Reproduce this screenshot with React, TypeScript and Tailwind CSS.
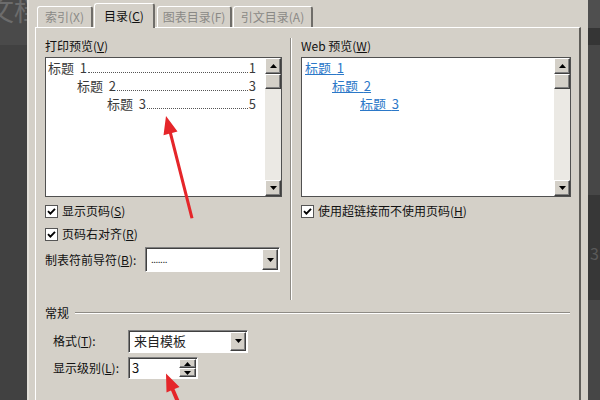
import React from "react";

const Tri = ({ up }: { up?: boolean }) => (
  <svg width="7" height="4" viewBox="0 0 7 4">
    <polygon points={up ? "3.5,0 7,4 0,4" : "0,0 7,0 3.5,4"} fill="#000" />
  </svg>
);

const Raised = ({ className = "", children }: { className?: string; children?: React.ReactNode }) => (
  <div
    className={`bg-[#d4d0c8] border border-t-white border-l-white border-b-[#404040] border-r-[#404040] shadow-[inset_-1px_-1px_0_#808080] flex items-center justify-center ${className}`}
  >
    {children}
  </div>
);

const Scrollbar = () => (
  <div className="w-[16px] flex flex-col bg-[#ebe9e4]">
    <Raised className="h-[16px]">
      <Tri up />
    </Raised>
    <Raised className="h-[15px]" />
    <div className="flex-1" />
    <Raised className="h-[16px]">
      <Tri />
    </Raised>
  </div>
);

const Check = () => (
  <div className="w-[13px] h-[13px] bg-white border border-[#555] flex items-center justify-center shrink-0">
    <svg width="9" height="9" viewBox="0 0 9 9">
      <polyline points="1,4.2 3.4,6.6 8,1.8" fill="none" stroke="#000" strokeWidth="1.9" />
    </svg>
  </div>
);

const Combo = ({ className = "", children }: { className?: string; children?: React.ReactNode }) => (
  <div
    className={`flex bg-white border border-t-[#808080] border-l-[#808080] border-b-white border-r-white shadow-[inset_1px_1px_0_#404040] p-[1px] ${className}`}
  >
    <div className="flex-1 flex items-center pl-[4px] text-[13px] text-[#222]">{children}</div>
    <Raised className="w-[16px]">
      <Tri />
    </Raised>
  </div>
);

const printRows = [
  { pad: "pl-[2px]", n: "1", page: "1" },
  { pad: "pl-[31px]", n: "2", page: "3" },
  { pad: "pl-[61px]", n: "3", page: "5" },
];

const webRows = [
  { pad: "pl-[3px]", n: "1" },
  { pad: "pl-[30px]", n: "2" },
  { pad: "pl-[58px]", n: "3" },
];

const Tab = ({ w, active, children }: { w: string; active?: boolean; children: React.ReactNode }) => (
  <div
    className={`${w} ${
      active ? "h-[25px] -mb-px relative z-10 text-[#111]" : "h-[21px] text-[#8a8986]"
    } bg-[#d4d0c8] border-t border-l border-white border-r-2 border-r-[#6f6d69] rounded-t-[3px] flex items-center justify-center`}
  >
    {children}
  </div>
);

export default function App() {
  return (
    <div className="w-[600px] h-[400px] overflow-hidden relative flex bg-[#444] font-['Noto_Sans_CJK_SC',sans-serif] text-[12px] text-[#111]">
      {/* dark page behind the dialog, left */}
      <div className="w-[27px] shrink-0 flex flex-col overflow-hidden">
        <div className="h-[45px] bg-[#4a4a4a] overflow-hidden">
          <div className="-ml-[14px] -mt-[9px] text-[28px] leading-[36px] text-[#6c6c6c] whitespace-nowrap">文档</div>
        </div>
        <div className="flex-1 bg-[#414141]" />
      </div>

      {/* dialog */}
      <div className="w-[561px] shrink-0 flex flex-col bg-[#d4d0c8] border-l-2 border-[#e2dfd8] pt-[3px] pl-[6px] pr-[7px]">
        <div className="h-[24px] flex items-end pl-[2px]">
          <Tab w="w-[56px]">索引(X)</Tab>
          <div className="ml-[1px]">
            <Tab w="w-[61px]" active>
              目录(<span className="underline">C</span>)
            </Tab>
          </div>
          <div className="ml-[2px]">
            <Tab w="w-[75px]">图表目录(F)</Tab>
          </div>
          <div className="ml-[1px]">
            <Tab w="w-[80px]">引文目录(A)</Tab>
          </div>
        </div>

        <div className="flex-1 flex flex-col border-t border-l border-white border-r-2 border-r-[#5f5d59] pl-[9px] pt-[10px]">
          <div className="h-[262px] flex">
            {/* print preview */}
            <div className="w-[237px] flex flex-col">
              <div className="h-[16px] leading-[16px]">
                打印预览(<span className="underline">V</span>)
              </div>
              <div className="mt-[3px] h-[140px] border border-[#505050] flex">
                <div className="flex-1 bg-white pt-[1px] text-[13px] text-[#3a3a3a]">
                  {printRows.map((r) => (
                    <div key={r.n} className={`h-[18px] flex items-center pr-[9px] ${r.pad}`}>
                      <span className="whitespace-pre">标题  {r.n}</span>
                      <span className="flex-1 mx-[1px] translate-y-[4px] border-t border-dotted border-[#555]" />
                      <span>{r.page}</span>
                    </div>
                  ))}
                </div>
                <Scrollbar />
              </div>
              <div className="mt-[6px] h-[16px] flex items-center">
                <Check />
                <span className="ml-[4px]">
                  显示页码(<span className="underline">S</span>)
                </span>
              </div>
              <div className="mt-[7px] h-[16px] flex items-center">
                <Check />
                <span className="ml-[4px]">
                  页码右对齐(<span className="underline">R</span>)
                </span>
              </div>
              <div className="mt-[5px] h-[25px] flex items-center">
                <span className="w-[100px]">
                  制表符前导符(<span className="underline">B</span>):
                </span>
                <Combo className="w-[135px] h-[25px]">
                  <span className="text-[10px] tracking-[-0.5px] -mt-[3px]">.......</span>
                </Combo>
              </div>
            </div>

            {/* separator */}
            <div className="ml-[8px] w-[2px] border-l border-[#8e8b85] border-r border-r-white" />

            {/* web preview */}
            <div className="ml-[9px] w-[270px] flex flex-col">
              <div className="h-[16px] leading-[16px]">
                Web 预览(<span className="underline">W</span>)
              </div>
              <div className="mt-[3px] h-[140px] border border-[#505050] flex">
                <div className="flex-1 bg-white pt-[1px] text-[13px] text-[#2b78c8]">
                  {webRows.map((r) => (
                    <div key={r.n} className={`h-[18px] flex items-center ${r.pad}`}>
                      <span className="whitespace-pre underline">标题  {r.n}</span>
                    </div>
                  ))}
                </div>
                <Scrollbar />
              </div>
              <div className="mt-[6px] h-[16px] flex items-center">
                <Check />
                <span className="ml-[4px]">
                  使用超链接而不使用页码(<span className="underline">H</span>)
                </span>
              </div>
            </div>
          </div>

          {/* general group */}
          <div className="mt-[5px] h-[16px] flex items-center pr-[9px]">
            <span>常规</span>
            <div className="flex-1 ml-[6px] h-[2px] border-t border-[#8e8b85] border-b border-b-white" />
          </div>
          <div className="mt-[9px] h-[22px] flex items-center pl-[8px]">
            <span className="w-[75px]">
              格式(<span className="underline">T</span>):
            </span>
            <Combo className="w-[120px] h-[23px]">来自模板</Combo>
          </div>
          <div className="mt-[5px] h-[22px] flex items-center pl-[8px]">
            <span className="w-[75px]">
              显示级别(<span className="underline">L</span>):
            </span>
            <div className="w-[70px] h-[22px] flex bg-white border border-t-[#808080] border-l-[#808080] border-b-white border-r-white shadow-[inset_1px_1px_0_#404040] p-[1px]">
              <div className="flex-1 flex items-center pl-[2px] text-[13px]">3</div>
              <div className="w-[17px] flex flex-col">
                <Raised className="flex-1">
                  <Tri up />
                </Raised>
                <Raised className="flex-1">
                  <Tri />
                </Raised>
              </div>
            </div>
          </div>
        </div>
      </div>

      {/* dark page behind the dialog, right */}
      <div className="flex-1 min-w-0 flex flex-col overflow-hidden">
        <div className="h-[28px] bg-[#4f4f4f]" />
        <div className="h-[17px] bg-[#353535]" />
        <div className="h-[150px] bg-[#474747]" />
        <div className="h-[105px] bg-[#373737] overflow-hidden">
          <div className="mt-[48px] ml-[2px] text-[16px] leading-[20px] text-[#5a5a5a] whitespace-nowrap">3b</div>
        </div>
        <div className="flex-1 bg-[#464646]" />
      </div>

      {/* red annotation arrows */}
      <svg className="absolute inset-0 pointer-events-none" width="600" height="400" viewBox="0 0 600 400">
        <polygon points="166,116 177.5,131.5 172,133 193.5,218 190.5,218.5 169,133.8 163.5,135.3" fill="#e5262a" />
        <polygon points="166,373.5 179.5,387 174.5,389 188,420 184,421 171,390.6 166.5,392.6" fill="#e5262a" />
      </svg>
    </div>
  );
}
